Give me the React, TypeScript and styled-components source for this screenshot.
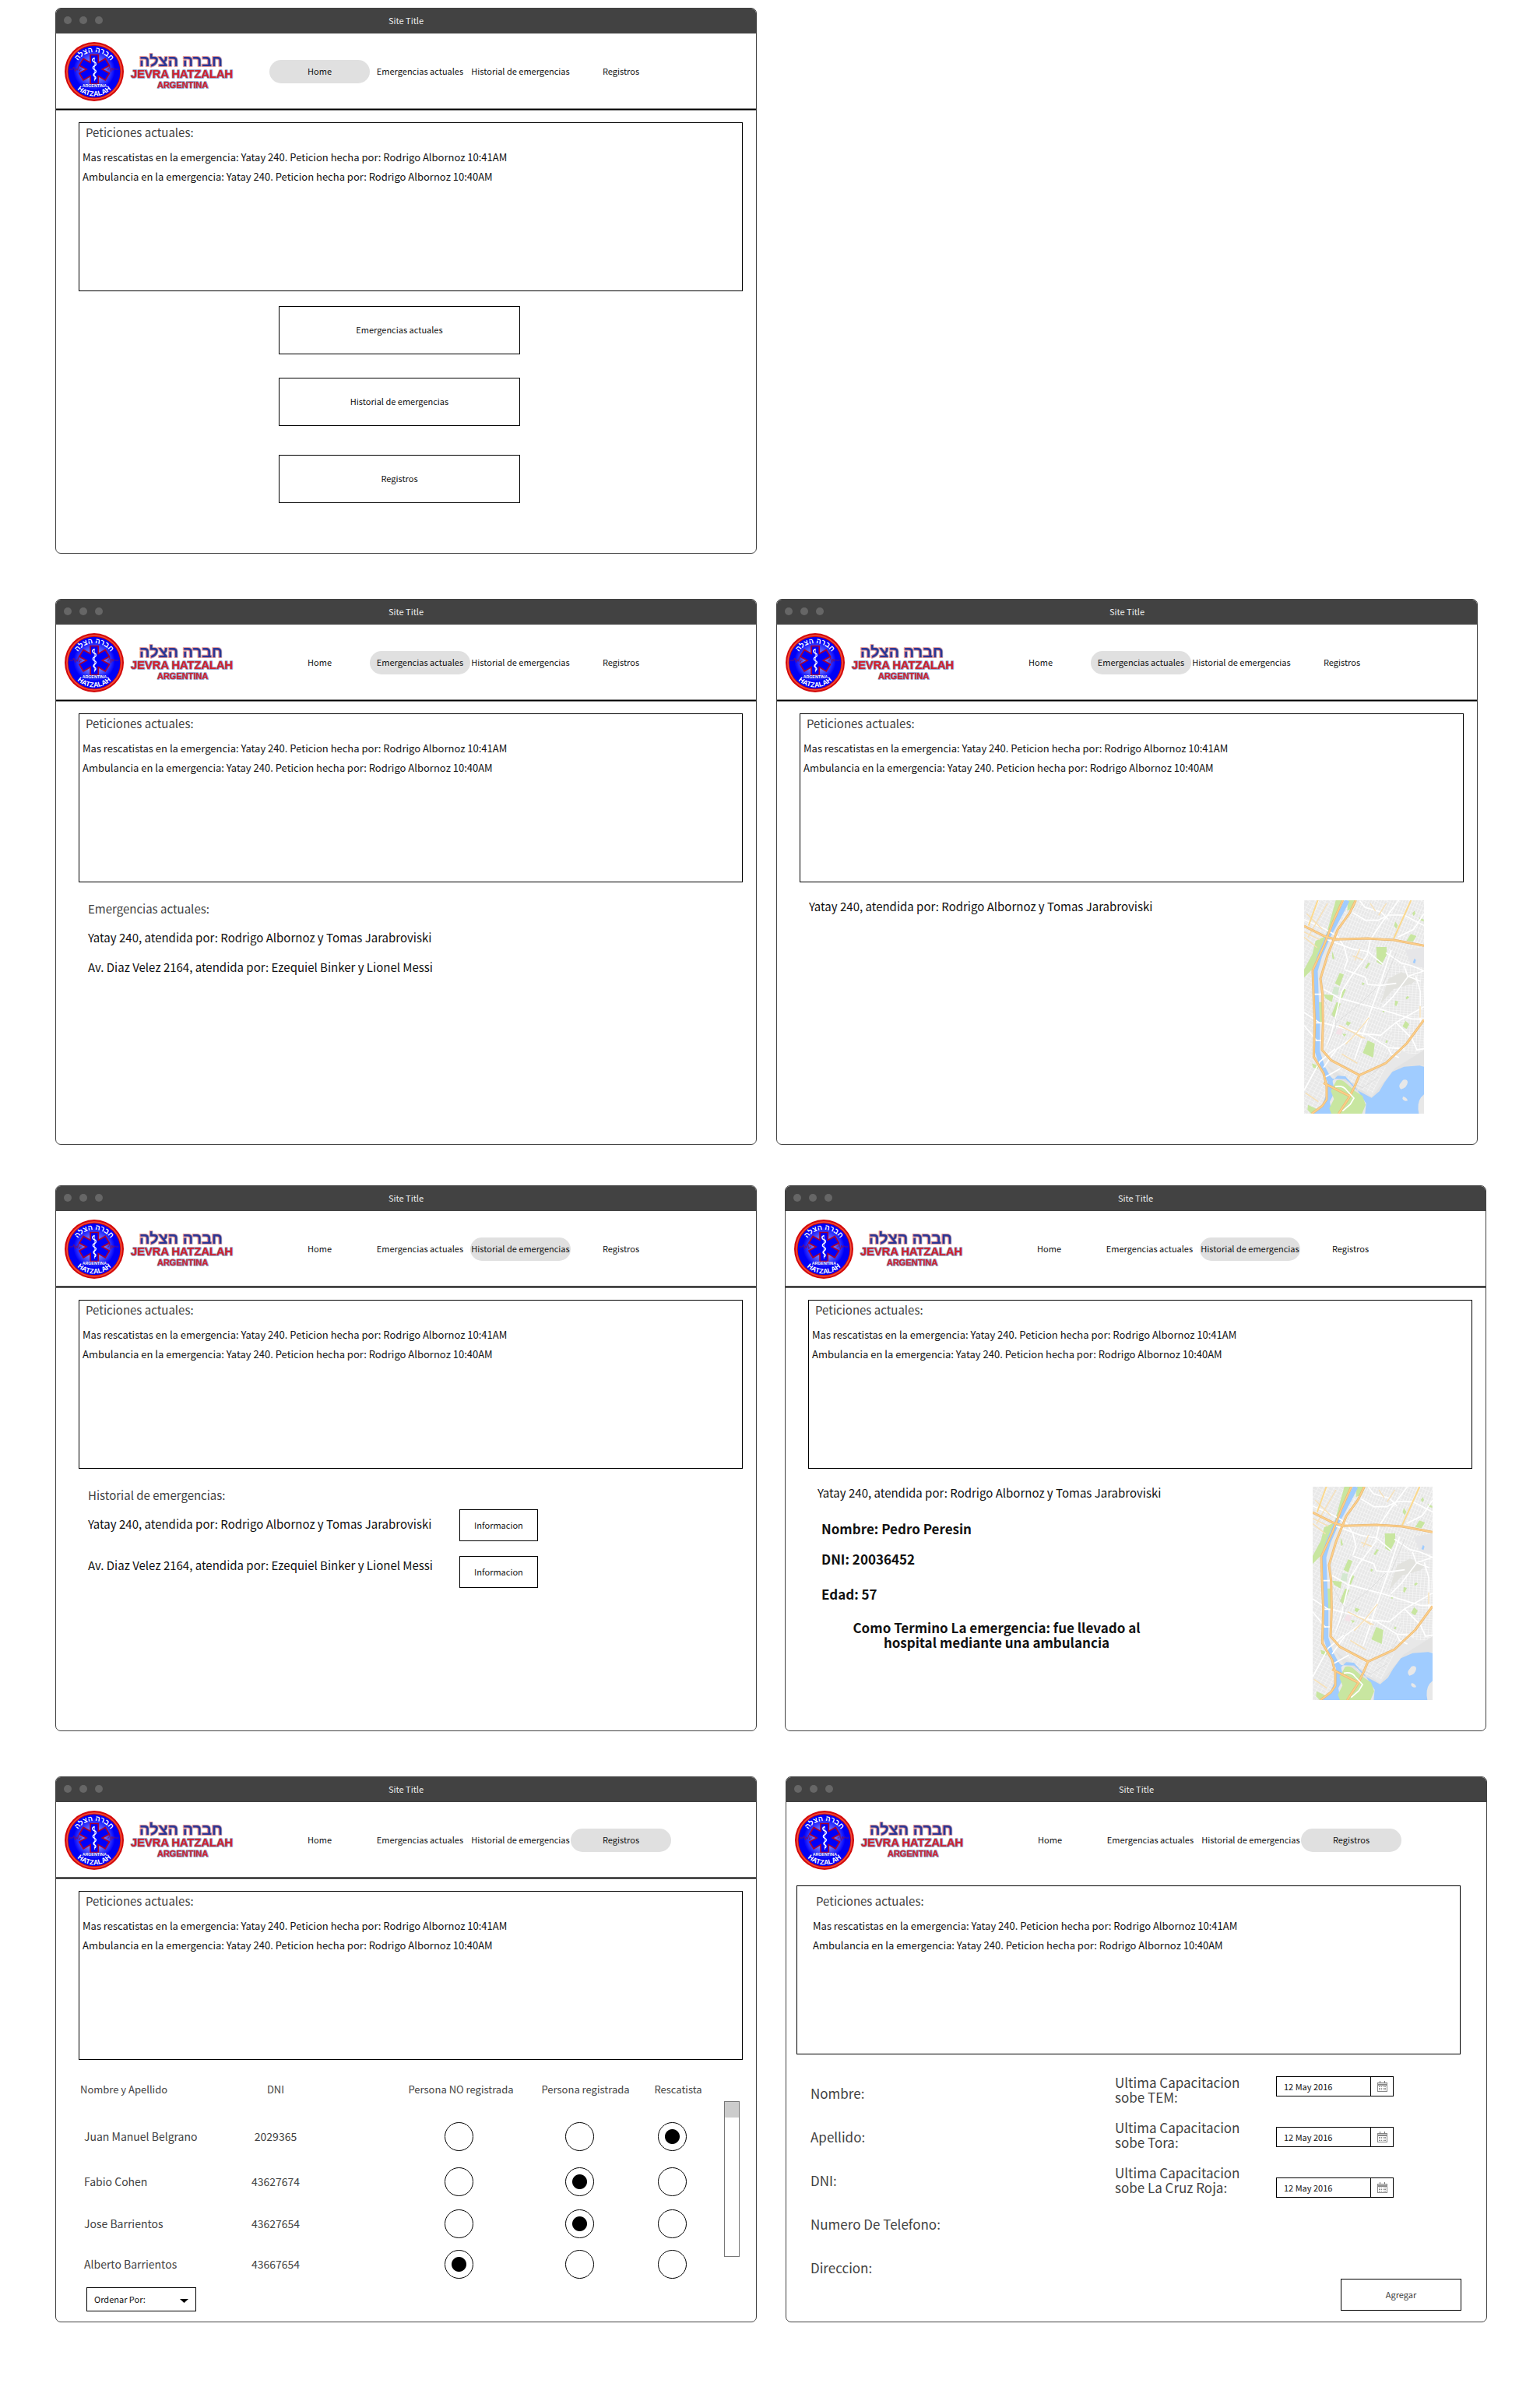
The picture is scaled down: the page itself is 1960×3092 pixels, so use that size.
import React, { useId } from 'react';
import styled, { createGlobalStyle } from 'styled-components';

const GlobalStyle = createGlobalStyle`
  * { box-sizing: border-box; }
  body {
    margin: 0;
    background: #fff;
    color: #111;
    font-family: "Noto Sans CJK JP", "Noto Sans", sans-serif;
    font-size: 14px;
  }
  h1, h2, p, ul { margin: 0; padding: 0; font-weight: 400; }
  ul { list-style: none; }
  button, input, select { font-family: inherit; color: inherit; margin: 0; }
`;

/* ---------- Board ---------- */

const Board = styled.main`
  display: flex;
  flex-direction: column;
  gap: 58px;
  padding: 10px 50px 110px 71px;
`;

const BoardRow = styled.div<{ $gap?: number; $pull?: boolean }>`
  display: flex;
  gap: ${(p) => p.$gap ?? 0}px;
  margin-top: ${(p) => (p.$pull ? -6 : 0)}px;
`;

/* ---------- Window chrome ---------- */

const Frame = styled.section`
  display: flex;
  flex-direction: column;
  flex: 1 1 0;
  min-width: 0;
  max-width: 901px;
  min-height: 701px;
  border: 1px solid #424242;
  border-radius: 7px;
  overflow: hidden;
  background: #fff;
`;

const TitleBar = styled.div`
  display: grid;
  grid-template-columns: 1fr auto 1fr;
  align-items: center;
  height: 32px;
  padding: 0 10px 2px;
  background: #424242;
`;

const Dots = styled.div`
  display: flex;
  gap: 10px;
`;

const Dot = styled.span`
  width: 10px;
  height: 10px;
  border-radius: 50%;
  background: #666;
`;

const SiteTitle = styled.h1`
  font-size: 11px;
  line-height: 16px;
  color: #eee;
`;

const Header = styled.header<{ $ruled: boolean }>`
  display: flex;
  align-items: center;
  height: 98px;
  padding-left: 11px;
  border-bottom: 1px solid ${(p) => (p.$ruled ? '#000' : '#fff')};
  box-shadow: ${(p) => (p.$ruled ? 'inset 0 -1px #777, 0 1px #777' : 'none')};
`;

const Brand = styled.a`
  display: flex;
  align-items: center;
  gap: 7px;
  margin-right: 45px;
`;

const Nav = styled.nav`
  display: flex;
`;

const NavLink = styled.a<{ $active: boolean }>`
  width: 129px;
  padding-bottom: 2px;
  border-radius: 15px;
  background: ${(p) => (p.$active ? '#e0e0e0' : 'transparent')};
  font-size: 11px;
  line-height: 28px;
  text-align: center;
  white-space: nowrap;
  color: #111;
  text-decoration: none;
`;

const SealSvg = styled.svg`
  display: block;
  width: 76px;
  height: 76px;
  overflow: visible;
`;

const WordmarkSvg = styled.svg`
  display: block;
  width: 135px;
  height: 50px;
  margin-bottom: 2px;
  overflow: visible;
`;

/* ---------- Petitions ---------- */

const Petitions = styled.section<{ $shifted: boolean }>`
  flex: none;
  height: 217px;
  margin: ${(p) => (p.$shifted ? '9px 33px 0 13px' : '16px 17px 0 29px')};
  padding: ${(p) => (p.$shifted ? '7px 0 0 20px' : '0 0 0 4px')};
  border: 1px solid #000;
`;

const PetitionsTitle = styled.h2`
  padding-left: 4px;
  margin-bottom: 7px;
  font-size: 15px;
  line-height: 24px;
  color: #424242;
`;

const PetitionRow = styled.li`
  font-size: 13px;
  line-height: 25px;
`;

/* ---------- Shared content ---------- */

const OutlineButton = styled.button<{ $w: number; $h: number }>`
  width: ${(p) => p.$w}px;
  height: ${(p) => p.$h}px;
  padding: 0 0 2px;
  border: 1px solid #000;
  background: #fff;
  font-size: 11px;
  line-height: 16px;
`;

const HomeActions = styled.div`
  display: flex;
  flex-direction: column;
  gap: 30px;
  padding: 19px 0 0 286px;

  > :last-child { margin-top: 7px; }
`;

const Listing = styled.section`
  padding: 16px 0 0 41px;
`;

const ListingTitle = styled.h2`
  font-size: 15px;
  line-height: 36px;
  color: #424242;
`;

const ListingBody = styled.div`
  display: flex;
  gap: 34px;
`;

const EmergencyList = styled.ul<{ $gap: number }>`
  display: flex;
  flex-direction: column;
  gap: ${(p) => p.$gap}px;
  font-size: 15px;
  line-height: 38px;
`;

const InfoButtons = styled.div`
  display: flex;
  flex-direction: column;
  gap: 19px;
`;

const Detail = styled.section`
  display: flex;
  justify-content: space-between;
  padding: 18px 68px 0 41px;
`;

const DetailHeading = styled.p`
  font-size: 15px;
  line-height: 26px;
`;

const Facts = styled.div`
  padding: 21px 0 0 5px;
  font-size: 17px;
  font-weight: 700;
  line-height: 24px;
`;

const Fact = styled.p<{ $after: number }>`
  margin-bottom: ${(p) => p.$after}px;
  font-weight: 700;
`;

const Outcome = styled.p`
  width: 400px;
  margin-left: 25px;
  font-weight: 700;
  line-height: 19px;
  text-align: center;
`;

const MapSvg = styled.svg`
  display: block;
  flex: none;
  width: 154px;
  height: 274px;
  margin-top: 5px;
`;

/* ---------- Records ---------- */

const Records = styled.section`
  display: flex;
  align-items: flex-start;
  padding: 10px 0 0 29px;
  color: #424242;
`;

const RecordsTable = styled.table`
  border-collapse: collapse;
  table-layout: fixed;
  width: 808px;
  font-size: 14px;
  line-height: 20px;
`;

const HeadCell = styled.th<{ $w: number; $left?: number }>`
  width: ${(p) => p.$w}px;
  height: 58px;
  padding: 0 0 2px ${(p) => p.$left ?? 0}px;
  font-size: 13px;
  font-weight: 400;
  text-align: center;
  white-space: nowrap;

  &:first-child { text-align: left; }
`;

const Cell = styled.td<{ $h: number; $left?: number; $right?: number }>`
  height: ${(p) => p.$h}px;
  padding: 0 ${(p) => p.$right ?? 0}px 0 ${(p) => p.$left ?? 0}px;
  text-align: center;
  vertical-align: middle;
  white-space: nowrap;

  &:first-child { text-align: left; }
`;

const Radio = styled.input`
  appearance: none;
  display: block;
  width: 37px;
  height: 37px;
  margin: 0 auto;
  border: 1px solid #000;
  border-radius: 50%;
  background: #fff;

  &:checked {
    background: radial-gradient(circle, #000 9px, #fff 10px);
  }
`;

const ScrollTrack = styled.div`
  width: 20px;
  height: 200px;
  margin: 43px 0 0 21px;
  border: 1px solid #777;
`;

const ScrollThumb = styled.div`
  height: 20px;
  background: #ccc;
`;

const SortBox = styled.div`
  position: relative;
  width: 141px;
  margin: 4px 0 0 39px;
`;

const SortSelect = styled.select`
  appearance: none;
  display: block;
  width: 100%;
  height: 31px;
  padding: 0 9px 1px;
  border: 1px solid #000;
  border-radius: 0;
  background: #fff;
  font-size: 11px;
  color: #111;
`;

const SortArrow = styled.svg`
  position: absolute;
  top: 15px;
  right: 10px;
  width: 11px;
  height: 5px;
  pointer-events: none;
`;

/* ---------- New record form ---------- */

const RecordForm = styled.form`
  display: grid;
  grid-template-columns: 391px 1fr;
  flex: 1;
  padding: 22px 32px 14px 31px;
  font-size: 17px;
  color: #424242;
`;

const TextFields = styled.div`
  display: flex;
  flex-direction: column;
`;

const TextField = styled.div`
  display: flex;
  gap: 8px;
  padding-right: 20px;
  line-height: 56px;
  white-space: nowrap;
`;

const BlankInput = styled.input`
  flex: 1;
  min-width: 0;
  border: 0;
  outline: 0;
  background: transparent;
  font-size: 17px;
`;

const FormSide = styled.div`
  display: flex;
  flex-direction: column;
  justify-content: space-between;
  align-items: flex-end;
`;

const Trainings = styled.div`
  display: flex;
  justify-content: space-between;
  width: 100%;
  padding-right: 87px;
`;

const TrainingLabels = styled.div`
  display: flex;
  flex-direction: column;
  gap: 20px;
  width: 180px;
  padding-top: 4px;
  line-height: 19px;
`;

const TrainingDates = styled.div`
  display: flex;
  flex-direction: column;
  gap: 39px;
  padding-top: 6px;
`;

const DateBox = styled.div`
  display: flex;
  width: 151px;
  height: 26px;
  border: 1px solid #000;
`;

const DateInput = styled.input`
  flex: 1;
  min-width: 0;
  padding: 0 9px;
  border: 0;
  background: transparent;
  font-size: 11px;
  color: #111;
`;

const DateButton = styled.button`
  display: grid;
  place-items: center;
  width: 29px;
  padding: 0;
  border: 0;
  border-left: 1px solid #000;
  background: #fff;
`;

/* ---------- Drawings ---------- */

function Seal() {
  const id = useId();
  return (
    <SealSvg viewBox="68 162 230 230" aria-hidden="true">
      <defs>
        <radialGradient id={`${id}g`} cx="50%" cy="50%" r="50%">
          <stop offset="0" stopColor="#b8bcff" />
          <stop offset="0.5" stopColor="#7076ff" />
          <stop offset="1" stopColor="#0202fa" />
        </radialGradient>
        <path id={`${id}t`} d="M107 277a76 76 0 0 1 152 0" />
        <path id={`${id}b`} d="M88 277a95 95 0 0 0 190 0" />
      </defs>
      <circle cx="183" cy="277" r="115" fill="#d40a0a" />
      <circle cx="183" cy="277" r="106" fill="none" stroke="#f0503c" strokeWidth="5" />
      <circle cx="183" cy="277" r="101" fill="#0000f5" />
      <circle cx="183" cy="270" r="80" fill={`url(#${id}g)`} />
      <path
        d="M86 268h14l4-9 5 17 4-12 4 8 4-16 4 20 4-8h5M233 268h6l4-12 5 22 4-16 4 10 4-9 4 5h14"
        fill="none"
        stroke="#7c1060"
        strokeWidth="2.5"
      />
      <path
        d="M168 212h31v30l27-15 16 26-28 15 28 15-16 27-27-16v30h-31v-30l-27 16-16-27 28-15-28-15 16-26 27 15z"
        fill="#0000fa"
        stroke="#a80030"
        strokeWidth="5"
      />
      <path
        d="M184 224c-12 4-8 14 0 16s8 12 0 15-8 11 0 14 8 10 1 14-6 9 0 12 5 8-1 13"
        fill="none"
        stroke="#fff"
        strokeWidth="4.5"
      />
      <path d="M184 222v92" stroke="#fff" strokeWidth="2" />
      <text
        fontFamily="Liberation Sans, sans-serif"
        fontWeight="700"
        fontSize="28"
        fill="#fff"
        textAnchor="middle"
      >
        <textPath href={`#${id}t`} startOffset="50%">חברה הצלה</textPath>
      </text>
      <text
        x="184"
        y="339"
        fontFamily="Liberation Sans, sans-serif"
        fontWeight="700"
        fontSize="16"
        fill="#fff"
        stroke="#0000c8"
        strokeWidth="1"
        paintOrder="stroke"
        textAnchor="middle"
      >
        ARGENTINA
      </text>
      <text
        fontFamily="Liberation Sans, sans-serif"
        fontWeight="700"
        fontSize="27"
        fill="#fff"
        textAnchor="middle"
      >
        <textPath href={`#${id}b`} startOffset="50%">HATZALAH</textPath>
      </text>
    </SealSvg>
  );
}

function Wordmark() {
  return (
    <WordmarkSvg viewBox="317 196 405 150" aria-hidden="true">
      <g
        fontWeight="700"
        textAnchor="middle"
        paintOrder="stroke"
        strokeLinejoin="round"
        fontFamily="Liberation Sans, sans-serif"
      >
        <text x="516" y="252" fontSize="60" fill="#2a3796" stroke="#e29a9a" strokeWidth="6">
          חברה הצלה
        </text>
        <text x="520" y="298" fontSize="44" fill="#d2202a" stroke="#8c9cc4" strokeWidth="5">
          JEVRA HATZALAH
        </text>
        <text x="523" y="338" fontSize="33" fill="#d2202a" stroke="#8c9cc4" strokeWidth="5">
          ARGENTINA
        </text>
      </g>
    </WordmarkSvg>
  );
}

const HIGHWAYS =
  'M224 48L185 135 150 225 108 318 112 430 116 520 112 650 150 715 162 765 162 815 145 840 105 870M274 48L250 98 205 160 165 260 138 350 146 410 148 520 144 625 180 665 288 722M288 722L272 760 250 805 208 870M288 722L390 675 470 600 537 508M75 147l75 38 45 14 125-4 100 6 117 22M150 752l100 50';

function CityMap() {
  const id = useId();
  return (
    <MapSvg viewBox="75 48 462 822" preserveAspectRatio="none" role="img" aria-label="Mapa">
      <defs>
        <pattern id={`${id}a`} width="11" height="17" patternUnits="userSpaceOnUse" patternTransform="rotate(22)">
          <path d="M0 0H11M0 0V17" stroke="#fcfcfc" strokeWidth="3.4" />
        </pattern>
        <pattern id={`${id}b`} width="14" height="10" patternUnits="userSpaceOnUse" patternTransform="rotate(4)">
          <path d="M0 0H14M0 0V10" stroke="#fcfcfc" strokeWidth="3" />
        </pattern>
        <pattern id={`${id}c`} width="18" height="13" patternUnits="userSpaceOnUse" patternTransform="rotate(28)">
          <path d="M0 0H18M0 0V13" stroke="#fcfcfc" strokeWidth="3" />
        </pattern>
      </defs>
      <rect x="75" y="48" width="462" height="822" fill="#e8e8e8" />
      <path d="M240 48H537V300H400L380 440 430 620H480L440 640 300 720 150 640 150 300z" fill={`url(#${id}a)`} />
      <path d="M400 300H537V640H480L430 620 380 440z" fill={`url(#${id}b)`} />
      <path d="M75 48H220L110 320 115 670 165 760 165 820 105 870H75z" fill={`url(#${id}c)`} />
      <path d="M400 350l50-25 60 25-20 20-70 20-50 55z" fill="#e2e2de" />
      <path d="M465 240l72-12v80l-50-10z" fill="#e6e6e8" />
      <path d="M160 680l75 55 100 70 90-110 112-70v60l-70 10-60 70-80 50-60-30-70-50z" fill="#e2e2e2" />
      <path d="M180 660L290 725 390 690 340 790 260 770z" fill={`url(#${id}c)`} />

      <g fill="#c8e6a0">
        <path d="M197 48h30L165 190 105 315 75 345v-30l32-60 12-50 40-20z" />
        <path d="M245 48h33l-12 30-25 10zM353 228h40v30l-20 38-18-10zM486 178l22 8-14 22-24-4z" />
        <path d="M320 588l27 12-6 54-40-18zM466 512l14 14-10 18-16-10zM212 328l16 6-16 44-18-10z" />
        <path d="M200 440l16 6-24 54-12-10zM228 388l8 4-16 38-6-8zM150 410l38 4-6 26-24-14z" />
        <path d="M426 130l10 14-6 14-8-12zM500 88l4 12-8 8-4-10zM518 114l18 8v8l-16-6zM322 288l8 4-14 20-6-4z" />
        <path d="M184 245l8 26-6 6-4-16zM240 514l16 6-10 12-10-6zM222 562l16 2-8 10zM426 434l12 4-8 18-6-4z" />
        <path d="M132 440h14v80h-12zM90 836l34 16-22 18-14-14zM105 676l26 10-4 12-18-6z" />
        <path d="M392 586l6 4-4 8-6-2zM300 364l8 4-6 8-4-4zM380 470l6 4-4 6-6-2zM474 416l6 6-10 8-4-6z" />
      </g>
      <path d="M208 540l16 6-6 22-22-6z" fill="#f4e2e8" />
      <path d="M190 380l20 4-4 30-24-6z" fill="#d4e8d0" />

      <path
        d="M241 48L210 108 168 185 135 262 118 320 121 400 126 520 126 630 145 690 175 745 172 795 140 870"
        fill="none"
        stroke="#a0ccff"
        strokeWidth="19"
      />
      <path
        d="M165 715l20 20 50 2 40 40 60 32 30-25 20-35 30-40 45-20 60-4 17 4v181H310l4-40-40-60-40-44-30-2-20 20 10 40-20 40 8 46H110l50-42 6-60z"
        fill="#a0ccff"
      />
      <path d="M105 870l55-42 16 42z" fill="#a0ccff" />
      <path d="M200 742q20-6 36 10l36 32 28 18 12 34-14 34H180l-8-20 18-36-12-32z" fill="#c8e6a0" />
      <path d="M456 740q18-4 18 10-4 22-26 26-10-10-4-20zM456 804q16 4 18 16-14 4-20-8zM537 796v74h-20q-8-40 8-62z" fill="#e8e8e8" />
      <path d="M500 272l6 6-4 14-8-4z" fill="#a0ccff" />

      <g fill="none" stroke="#fff" strokeWidth="5">
        <path d="M75 122l80 36 50 30 25 40 12 50-12 34" />
        <path d="M440 48L370 140 330 200 318 260 250 350 220 400 180 560 160 620" />
        <path d="M262 95l50 30 48 0 40-20 60 0 77 40M290 50l20 26 60 16 30 30" />
        <path d="M165 200l95 35 60 10 60 50M232 316l78 28 10 28 50 4 60-8" />
        <path d="M410 240L375 350 330 480 270 660M390 250l60 40 40 10 47 20M537 320l-60 20-60 80-40 40" />
        <path d="M537 100l-40 60-60 30M505 340l18 60 0 120M460 300l14 40 50 20" />
        <path d="M150 390l60 35 150 40 130 40 47 0M150 520l170 46 80 50 60 4" />
        <path d="M320 500l-40 62M280 560l90 8 60-50 107-60M280 562l-80 60-50 70" />
        <path d="M75 480l60 40M75 530l50 60M130 50L90 145M75 780l60-110 60-50M155 730l60-34" />
        <path d="M400 620l10 20 30 14M430 520l60 60 20 44 27-4" />
      </g>
      <path d="M113 410h28M116 520h28M118 588h24" stroke="#fff" strokeWidth="5" />
      <g fill="none" stroke="#d6d6d6" strokeWidth="2">
        <path d="M150 430l46 80v30l-36 80M198 520l100-80 60-60M230 740l70 30 60-40M400 640l-30 50-50 40M430 250l-50 120" />
      </g>
      <g fill="none" stroke="#f8e0b4" strokeWidth="4">
        <path d="M85 100l60 60M75 170l60 30M75 190l50 40M165 60L90 190M290 235l-20 45M262 262l40 16" />
        <path d="M325 500l-50 62-40 40M210 530l100 50M220 640l60 36M270 560l30 20M392 60l-30 46M522 455v45M80 790l50 34M330 60l20 30" />
      </g>
      <path d="M128 48L92 146M487 48L420 196" fill="none" stroke="#fbd98e" strokeWidth="6" />
      <g fill="none" strokeLinejoin="round">
        <path d={HIGHWAYS} stroke="#e9b873" strokeWidth="9" />
        <path d={HIGHWAYS} stroke="#fdcf8a" strokeWidth="5" />
      </g>
      <path d="M195 766q30-6 44 14l28 30-14 24-30 26" fill="none" stroke="#fff" strokeWidth="5" />
    </MapSvg>
  );
}

function CalendarIcon() {
  return (
    <svg width="13" height="14" viewBox="0 0 13 14" aria-hidden="true">
      <path d="M0 2h13v12H0zM1 6v7h11V6z" fill="#888" fillRule="evenodd" />
      <path d="M1 3h11v1H1z" fill="#ddd" />
      <path d="M3 0h1v3H3zM9 0h1v3H9z" fill="#777" />
      <path d="M2 7h2v1H2zM5 7h1v1H5zM7 7h1v1H7zM9 7h2v1H9zM2 9h2v1H2zM5 9h1v1H5zM7 9h1v1H7zM9 9h2v1H9zM2 11h2v1H2zM5 11h1v1H5zM7 11h1v1H7zM9 11h2v1H9z" fill="#888" />
    </svg>
  );
}

/* ---------- Screens ---------- */

const NAV_ITEMS = ['Home', 'Emergencias actuales', 'Historial de emergencias', 'Registros'];
const PETITIONS = [
  'Mas rescatistas en la emergencia: Yatay 240. Peticion hecha por: Rodrigo Albornoz 10:41AM',
  'Ambulancia en la emergencia: Yatay 240. Peticion hecha por: Rodrigo Albornoz 10:40AM',
];
const YATAY = 'Yatay 240, atendida por: Rodrigo Albornoz y Tomas Jarabroviski';
const EMERGENCIES = [YATAY, 'Av. Diaz Velez 2164, atendida por: Ezequiel Binker y Lionel Messi'];

type WindowProps = { active: string; plain?: boolean; children: React.ReactNode };

function SiteWindow({ active, plain = false, children }: WindowProps) {
  return (
    <Frame>
      <TitleBar>
        <Dots>
          <Dot />
          <Dot />
          <Dot />
        </Dots>
        <SiteTitle>Site Title</SiteTitle>
      </TitleBar>
      <Header $ruled={!plain}>
        <Brand href="#home" aria-label="Jevra Hatzalah Argentina">
          <Seal />
          <Wordmark />
        </Brand>
        <Nav>
          {NAV_ITEMS.map((item) => (
            <NavLink key={item} href="#nav" $active={item === active}>
              {item}
            </NavLink>
          ))}
        </Nav>
      </Header>
      <Petitions $shifted={plain}>
        <PetitionsTitle>Peticiones actuales:</PetitionsTitle>
        <ul>
          {PETITIONS.map((text) => (
            <PetitionRow key={text}>{text}</PetitionRow>
          ))}
        </ul>
      </Petitions>
      {children}
    </Frame>
  );
}

const ROLES = ['Persona NO registrada', 'Persona registrada', 'Rescatista'];
const PEOPLE = [
  { name: 'Juan Manuel Belgrano', dni: '2029365', role: 2, height: 60 },
  { name: 'Fabio Cohen', dni: '43627674', role: 1, height: 56 },
  { name: 'Jose Barrientos', dni: '43627654', role: 1, height: 52 },
  { name: 'Alberto Barrientos', dni: '43667654', role: 0, height: 52 },
];

function RecordsScreen() {
  return (
    <>
      <Records>
        <RecordsTable>
          <thead>
            <tr>
              <HeadCell $w={150} $left={2}>Nombre y Apellido</HeadCell>
              <HeadCell $w={206}>DNI</HeadCell>
              <HeadCell $w={214} $left={56}>{ROLES[0]}</HeadCell>
              <HeadCell $w={152} $left={10}>{ROLES[1]}</HeadCell>
              <HeadCell $w={86} $left={10}>{ROLES[2]}</HeadCell>
            </tr>
          </thead>
          <tbody>
            {PEOPLE.map((person) => (
              <tr key={person.name}>
                <Cell $h={person.height} $left={7}>{person.name}</Cell>
                <Cell $h={person.height}>{person.dni}</Cell>
                {ROLES.map((role, i) => (
                  <Cell
                    key={role}
                    $h={person.height}
                    $left={i === 0 ? 50 : 0}
                    $right={i === 0 ? 0 : 6}
                  >
                    <Radio
                      type="radio"
                      name={person.name}
                      aria-label={`${person.name}: ${role}`}
                      defaultChecked={person.role === i}
                    />
                  </Cell>
                ))}
              </tr>
            ))}
          </tbody>
        </RecordsTable>
        <ScrollTrack>
          <ScrollThumb />
        </ScrollTrack>
      </Records>
      <SortBox>
        <SortSelect aria-label="Ordenar registros">
          <option>Ordenar Por:</option>
        </SortSelect>
        <SortArrow viewBox="0 0 11 5" aria-hidden="true">
          <path d="M0 0h11L5.5 5z" />
        </SortArrow>
      </SortBox>
    </>
  );
}

const TEXT_FIELDS = ['Nombre', 'Apellido', 'DNI', 'Numero De Telefono', 'Direccion'];
const TRAININGS = ['TEM', 'Tora', 'La Cruz Roja'];

function NewRecordScreen() {
  return (
    <RecordForm>
      <TextFields>
        {TEXT_FIELDS.map((field) => (
          <TextField key={field}>
            <label htmlFor={`field-${field}`}>{field}:</label>
            <BlankInput id={`field-${field}`} type="text" />
          </TextField>
        ))}
      </TextFields>
      <FormSide>
        <Trainings>
          <TrainingLabels>
            {TRAININGS.map((name) => (
              <label key={name} htmlFor={`date-${name}`}>
                Ultima Capacitacion sobe {name}:
              </label>
            ))}
          </TrainingLabels>
          <TrainingDates>
            {TRAININGS.map((name) => (
              <DateBox key={name}>
                <DateInput id={`date-${name}`} type="text" defaultValue="12 May 2016" />
                <DateButton type="button" aria-label="Abrir calendario">
                  <CalendarIcon />
                </DateButton>
              </DateBox>
            ))}
          </TrainingDates>
        </Trainings>
        <OutlineButton type="button" $w={155} $h={41}>Agregar</OutlineButton>
      </FormSide>
    </RecordForm>
  );
}

export default function App() {
  return (
    <>
      <GlobalStyle />
      <Board>
        <BoardRow>
          <SiteWindow active="Home">
            <HomeActions>
              {NAV_ITEMS.slice(1).map((item) => (
                <OutlineButton key={item} type="button" $w={310} $h={62}>{item}</OutlineButton>
              ))}
            </HomeActions>
          </SiteWindow>
        </BoardRow>

        <BoardRow $gap={25}>
          <SiteWindow active="Emergencias actuales">
            <Listing>
              <ListingTitle>Emergencias actuales:</ListingTitle>
              <EmergencyList $gap={0}>
                {EMERGENCIES.map((text) => <li key={text}>{text}</li>)}
              </EmergencyList>
            </Listing>
          </SiteWindow>
          <SiteWindow active="Emergencias actuales">
            <Detail>
              <DetailHeading>{YATAY}</DetailHeading>
              <CityMap />
            </Detail>
          </SiteWindow>
        </BoardRow>

        <BoardRow $gap={36} $pull>
          <SiteWindow active="Historial de emergencias">
            <Listing>
              <ListingTitle>Historial de emergencias:</ListingTitle>
              <ListingBody>
                <EmergencyList $gap={15}>
                  {EMERGENCIES.map((text) => <li key={text}>{text}</li>)}
                </EmergencyList>
                <InfoButtons>
                  {EMERGENCIES.map((text) => (
                    <OutlineButton key={text} type="button" $w={101} $h={41}>Informacion</OutlineButton>
                  ))}
                </InfoButtons>
              </ListingBody>
            </Listing>
          </SiteWindow>
          <SiteWindow active="Historial de emergencias">
            <Detail>
              <div>
                <DetailHeading>{YATAY}</DetailHeading>
                <Facts>
                  <Fact $after={15}>Nombre: Pedro Peresin</Fact>
                  <Fact $after={21}>DNI: 20036452</Fact>
                  <Fact $after={21}>Edad: 57</Fact>
                  <Outcome>Como Termino La emergencia: fue llevado al hospital mediante una ambulancia</Outcome>
                </Facts>
              </div>
              <CityMap />
            </Detail>
          </SiteWindow>
        </BoardRow>

        <BoardRow $gap={37}>
          <SiteWindow active="Registros">
            <RecordsScreen />
          </SiteWindow>
          <SiteWindow active="Registros" plain>
            <NewRecordScreen />
          </SiteWindow>
        </BoardRow>
      </Board>
    </>
  );
}
